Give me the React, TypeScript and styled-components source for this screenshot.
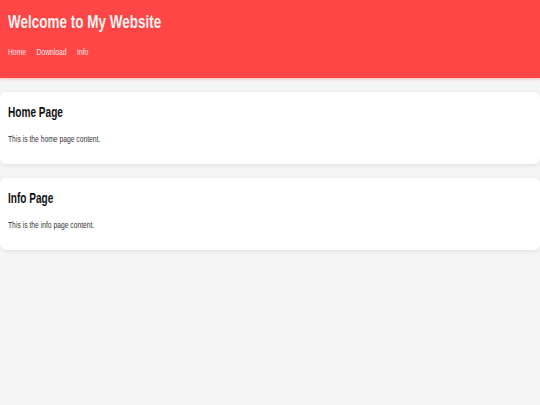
import React from "react";
import styled, { createGlobalStyle } from "styled-components";

const GlobalStyle = createGlobalStyle`
  html, body {
    margin: 0;
    padding: 0;
    background: #f5f5f5;
    font-family: "Liberation Sans", Arial, sans-serif;
  }
`;

const Page = styled.div`
  min-height: 405px;
  background: #f5f5f5;
  display: flex;
  flex-direction: column;
`;

const Header = styled.header`
  background: #ff4646;
  padding: 12px 8px 21px;
  box-shadow: 0 1px 3px rgba(255, 70, 70, 0.35);
  display: flex;
  flex-direction: column;
  gap: 14px;
`;

const Condensed = styled.div<{ $scale?: number }>`
  transform: scaleX(${(p) => p.$scale ?? 0.75});
  transform-origin: left center;
  white-space: nowrap;
`;

const Title = styled.h1`
  margin: 0;
  font-size: 18px;
  font-weight: bold;
  color: #f7f2f2;
  line-height: normal;
`;

const Nav = styled.nav`
  display: flex;
  gap: 14px;
`;

const NavLink = styled.a`
  font-size: 9px;
  color: #fbeaea;
  text-decoration: none;
  line-height: normal;
`;

const Main = styled.main`
  display: flex;
  flex-direction: column;
  gap: 14px;
  padding-top: 14px;
`;

const Card = styled.section`
  background: #ffffff;
  border-radius: 6px;
  box-shadow: 0 1px 4px rgba(0, 0, 0, 0.1);
  padding: 12px 8px 20px;
  display: flex;
  flex-direction: column;
  gap: 14px;
`;

const CardTitle = styled.h2`
  margin: 0;
  font-size: 14px;
  font-weight: bold;
  color: #111;
  line-height: normal;
`;

const CardText = styled.p`
  margin: 0;
  font-size: 9px;
  color: #333;
  line-height: normal;
`;

const pages = [
  { title: "Home Page", text: "This is the home page content." },
  { title: "Info Page", text: "This is the info page content." },
];

export default function App() {
  return (
    <>
      <GlobalStyle />
      <Page>
        <Header>
          <Condensed>
            <Title>Welcome to My Website</Title>
          </Condensed>
          <Condensed>
            <Nav>
              <NavLink href="#">Home</NavLink>
              <NavLink href="#">Download</NavLink>
              <NavLink href="#">Info</NavLink>
            </Nav>
          </Condensed>
        </Header>
        <Main>
          {pages.map((p) => (
            <Card key={p.title}>
              <Condensed $scale={0.72}>
                <CardTitle>{p.title}</CardTitle>
              </Condensed>
              <Condensed>
                <CardText>{p.text}</CardText>
              </Condensed>
            </Card>
          ))}
        </Main>
      </Page>
    </>
  );
}
